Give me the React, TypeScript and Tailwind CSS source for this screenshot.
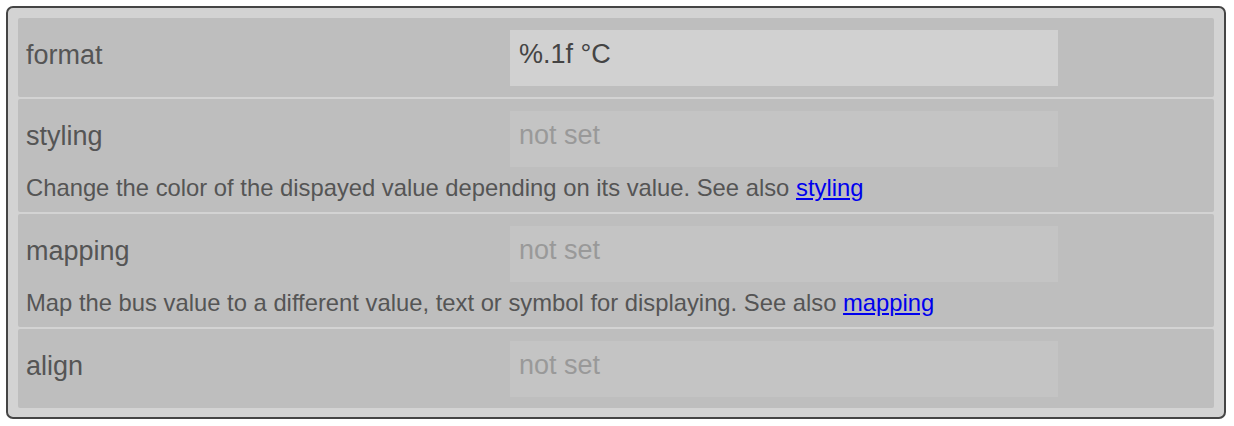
import React from 'react';

type Prop = {
  name: string;
  value?: string;
  help?: string;
  link?: string;
};

const props: Prop[] = [
  { name: 'format', value: '%.1f °C' },
  { name: 'styling', help: 'Change the color of the dispayed value depending on its value. See also ', link: 'styling' },
  { name: 'mapping', help: 'Map the bus value to a different value, text or symbol for displaying. See also ', link: 'mapping' },
  { name: 'align' },
];

const PropRow = ({ p }: { p: Prop }) => (
  <div className={'bg-[#bebebe] rounded-[2px] px-2 pt-3 ' + (p.help ? 'pb-[10px]' : 'pb-[11px]')}>
    <div className="flex items-start">
      <div className="w-[484px] pt-[9px] text-[27px] leading-[32px] text-[#555]">{p.name}</div>
      <div
        className={
          'w-[548px] h-[56px] px-[9px] pt-[8px] text-[27px] leading-[32px] ' +
          (p.value ? 'bg-[#d1d1d1] text-[#444]' : 'bg-[#c4c4c4] text-[#999]')
        }
      >
        {p.value ?? 'not set'}
      </div>
    </div>
    {p.help && (
      <div className="mt-[7px] text-[23.8px] leading-[28px] text-[#555]">
        {p.help}
        <a href="#" className="text-[#0000ee] underline">{p.link}</a>
      </div>
    )}
  </div>
);

export default function App() {
  return (
    <div className="p-[6px] bg-white font-['Liberation_Sans',Arial,sans-serif]">
      <div className="w-[1220px] h-[413px] border-2 border-[#454545] rounded-[7px] bg-[#d3d3d3] p-[10px] flex flex-col gap-[2px]">
        {props.map((p) => (
          <PropRow key={p.name} p={p} />
        ))}
      </div>
    </div>
  );
}
